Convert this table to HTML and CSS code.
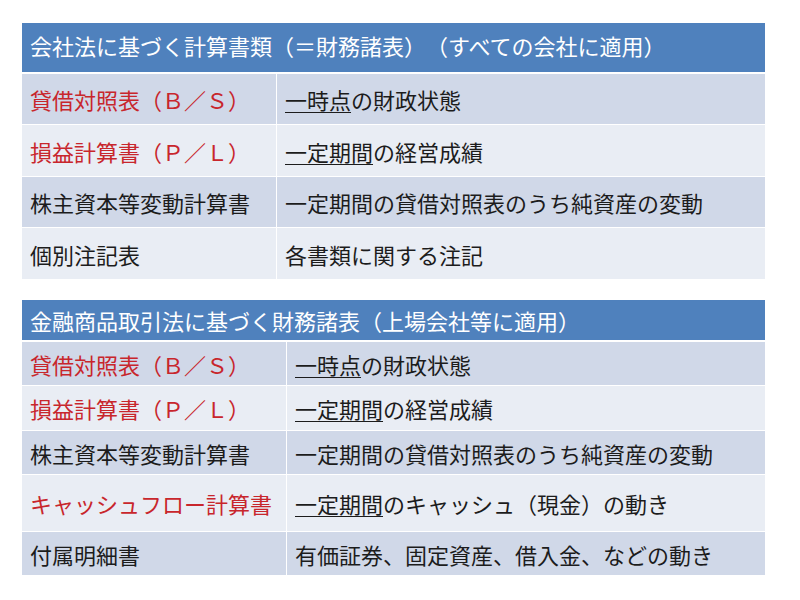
FILE: index.html
```html
<!DOCTYPE html>
<html lang="ja">
<head>
<meta charset="utf-8">
<title>財務諸表</title>
<link rel="stylesheet" href="styles.css">
</head>
<body>
<div class="page">
  <section class="tbl tbl-a">
    <div class="head">会社法に基づく計算書類（＝財務諸表）（すべての会社に適用）</div>
    <div class="cell odd red">貸借対照表（Ｂ／Ｓ）</div>
    <div class="cell odd"><span><u>一時点</u>の財政状態</span></div>
    <div class="cell even red">損益計算書（Ｐ／Ｌ）</div>
    <div class="cell even"><span><u>一定期間</u>の経営成績</span></div>
    <div class="cell odd">株主資本等変動計算書</div>
    <div class="cell odd">一定期間の貸借対照表のうち純資産の変動</div>
    <div class="cell even">個別注記表</div>
    <div class="cell even">各書類に関する注記</div>
  </section>

  <section class="tbl tbl-b">
    <div class="head">金融商品取引法に基づく財務諸表（上場会社等に適用）</div>
    <div class="cell odd red">貸借対照表（Ｂ／Ｓ）</div>
    <div class="cell odd"><span><u>一時点</u>の財政状態</span></div>
    <div class="cell even red">損益計算書（Ｐ／Ｌ）</div>
    <div class="cell even"><span><u>一定期間</u>の経営成績</span></div>
    <div class="cell odd">株主資本等変動計算書</div>
    <div class="cell odd">一定期間の貸借対照表のうち純資産の変動</div>
    <div class="cell even red">キャッシュフロー計算書</div>
    <div class="cell even"><span><u>一定期間</u>のキャッシュ（現金）の動き</span></div>
    <div class="cell odd">付属明細書</div>
    <div class="cell odd">有価証券、固定資産、借入金、などの動き</div>
  </section>
</div>
</body>
</html>
```

FILE: styles.css
```css
html, body {
  margin: 0;
  padding: 0;
  background: #ffffff;
}

body {
  font-family: "Noto Sans CJK JP", "Noto Sans", sans-serif;
  color: #1c1c1c;
  font-size: 22px;
  text-spacing-trim: space-all;
}

.page {
  width: 743px;
  padding: 23px 0 0 22px;
  display: flex;
  flex-direction: column;
  gap: 21px;
}

.tbl {
  display: grid;
  row-gap: 1px;
  column-gap: 1px;
  background: #ffffff;
}

.tbl-a {
  grid-template-columns: 254px 1fr;
  grid-template-rows: 50px 50px 51px 50px 51px;
}

.tbl-b {
  grid-template-columns: 264px 1fr;
  grid-template-rows: 41px 43px 44px 43px 56px 43px;
}

.head {
  grid-column: 1 / -1;
  background: #4f81bd;
  color: #ffffff;
  display: flex;
  align-items: center;
  padding-left: 8px;
  margin-bottom: 1px;
  line-height: 1;
  white-space: nowrap;
}

.tbl-a .head {
  padding-bottom: 6px;
}

.cell {
  display: flex;
  align-items: center;
  padding-left: 8px;
  line-height: 1;
  white-space: nowrap;
}

.odd {
  background: #d0d8e8;
}

.even {
  background: #e9edf4;
}

.red {
  color: #c8262c;
}

u {
  text-decoration-thickness: 1px;
  text-underline-offset: 3px;
}
```
